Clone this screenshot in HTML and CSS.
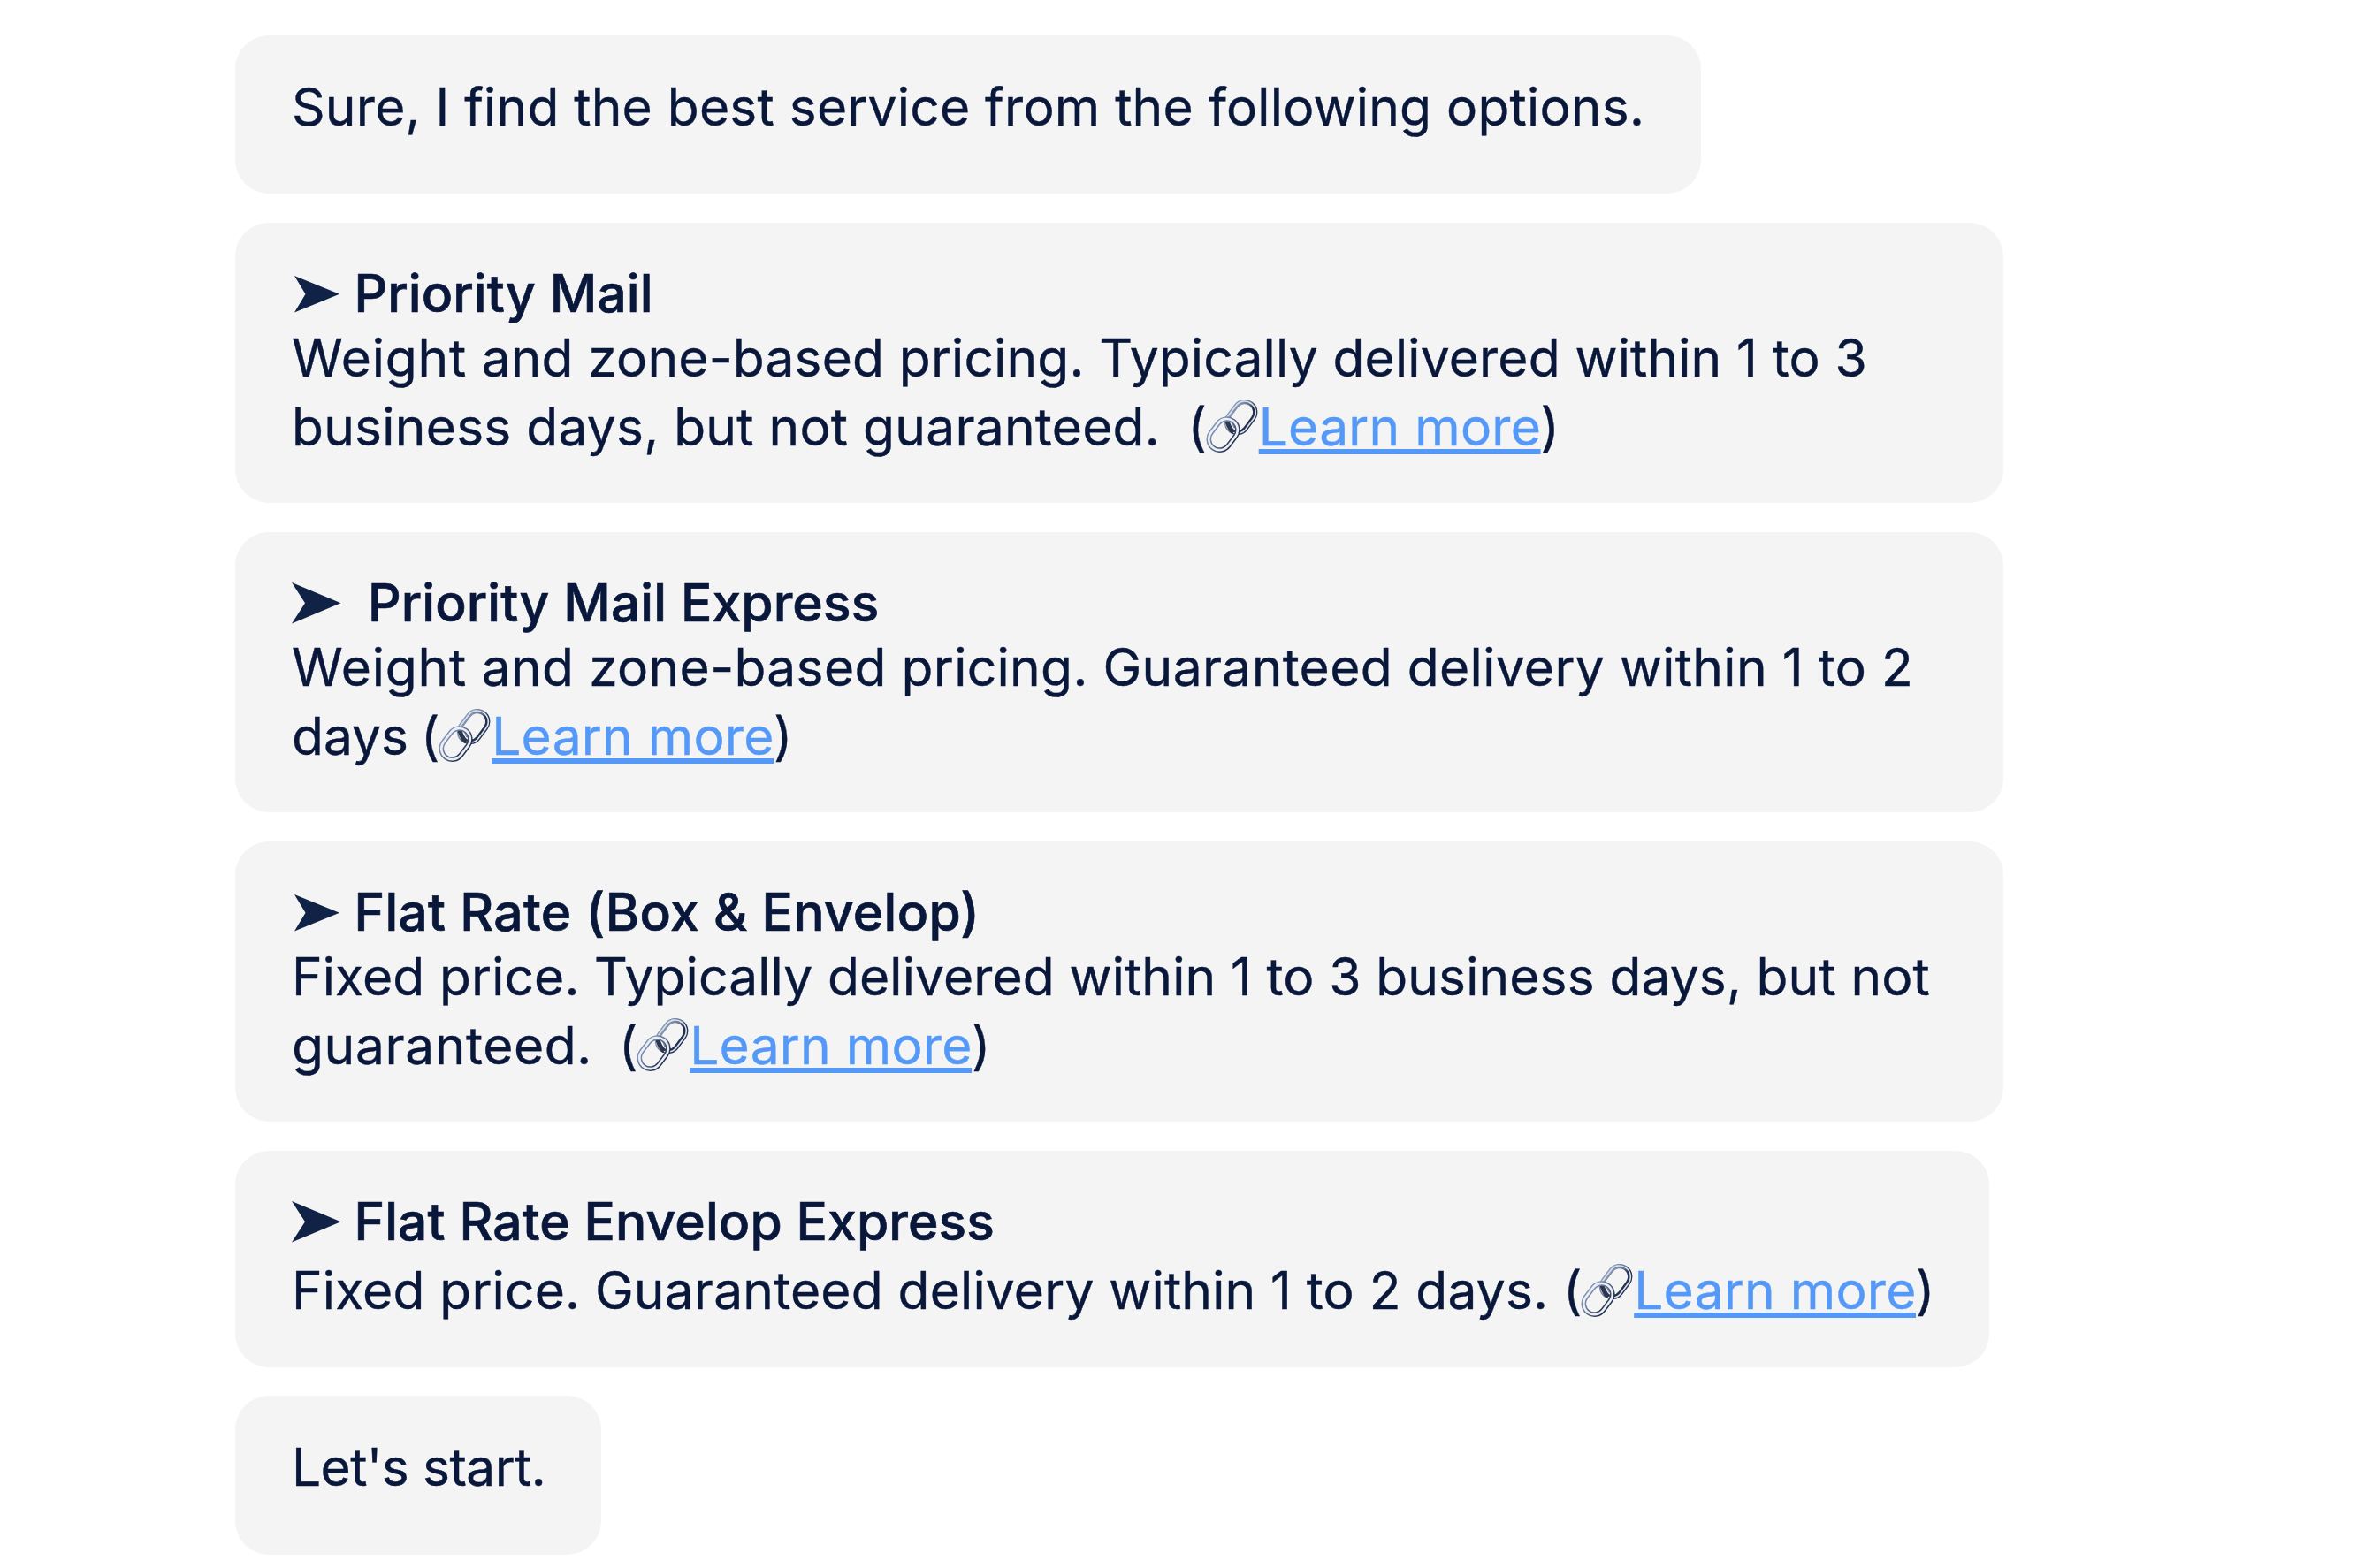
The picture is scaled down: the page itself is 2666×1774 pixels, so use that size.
FILE: index.html
```
<!DOCTYPE html>
<html lang="en">
<head>
<meta charset="utf-8">
<title>Shipping options</title>
<link rel="stylesheet" href="styles.css">
</head>
<body>
<svg class="defs" width="0" height="0" aria-hidden="true">
  <defs>
    <linearGradient id="metal-back" x1="0" y1="0" x2="0" y2="1">
      <stop offset="0" stop-color="#8797b2"/>
      <stop offset=".45" stop-color="#667289"/>
      <stop offset=".7" stop-color="#202b48"/>
      <stop offset="1" stop-color="#26324f"/>
    </linearGradient>
    <linearGradient id="metal-front" x1="0" y1="0" x2="0" y2="1">
      <stop offset="0" stop-color="#8292b0"/>
      <stop offset=".6" stop-color="#58647e"/>
      <stop offset="1" stop-color="#29334d"/>
    </linearGradient>
    <symbol id="arrow-s" viewBox="0 0 51 42"><path d="M0 0 51 20.800 0 41.500 12.500 20.800Z"/></symbol>
    <symbol id="arrow-l" viewBox="0 0 56 47"><path d="M0 0 55.500 23.200 0 46.500 15 23.200Z"/></symbol>
    <symbol id="chain" viewBox="0 0 178 180">
      <g fill="none">
        <g transform="rotate(-53 119.500 60)">
          <rect x="62.500" y="24" width="114" height="72" rx="36" stroke="url(#metal-back)" stroke-width="16"/>
          <rect x="61" y="22.500" width="117" height="75" rx="37" stroke="#d5e0f0" stroke-width="5"/>
        </g>
        <path d="M70 62c4 22 10 36 24 50" stroke="#2b3650" stroke-width="15"/>
        <path d="M78 68c9 5 16 14 19 28" stroke="#8a96ad" stroke-width="6"/>
        <g transform="rotate(-53 59 119)">
          <rect x="2" y="82" width="114" height="74" rx="37" stroke="url(#metal-front)" stroke-width="17"/>
          <rect x="2" y="82" width="114" height="74" rx="37" stroke="#e9f0fa" stroke-width="8"/>
        </g>
      </g>
    </symbol>
  </defs>
</svg>
<main class="chat">
  <section class="bubble bubble-intro">
    <p class="line fit-intro">Sure, I find the best service from the following options.</p>
  </section>

  <section class="bubble bubble-wide">
    <h2 class="title tight"><svg class="arrow small"><use href="#arrow-s"/></svg>Priority Mail</h2>
    <p class="line fit-a"><span class="loose">Weight</span> and zone-based pricing. Typically delivered within 1 to 3</p>
    <p class="line"><span class="lead-a">business days, but not guaranteed.</span>(<svg class="chain"><use href="#chain"/></svg><a class="link">Learn more</a>)</p>
  </section>

  <section class="bubble bubble-wide">
    <h2 class="title tight"><svg class="arrow large spaced"><use href="#arrow-l"/></svg>Priority Mail Express</h2>
    <p class="line fit-c"><span class="loose">Weight</span> and zone-based pricing. Guaranteed delivery within 1 to 2</p>
    <p class="line"><span class="lead-b">days</span>(<svg class="chain"><use href="#chain"/></svg><a class="link">Learn more</a>)</p>
  </section>

  <section class="bubble bubble-wide">
    <h2 class="title tight roomy"><svg class="arrow small"><use href="#arrow-s"/></svg>Flat Rate (Box &amp; Envelop)</h2>
    <p class="line fit-b">Fixed price. Typically delivered within 1 to 3 business days, but not</p>
    <p class="line"><span class="lead-c">guaranteed.</span>(<svg class="chain"><use href="#chain"/></svg><a class="link">Learn more</a>)</p>
  </section>

  <section class="bubble bubble-short">
    <h2 class="title"><svg class="arrow large"><use href="#arrow-l"/></svg>Flat Rate Envelop Express</h2>
    <p class="line"><span class="lead-d">Fixed price. Guaranteed delivery within 1 to 2 days.</span>(<svg class="chain"><use href="#chain"/></svg><a class="link">Learn more</a>)</p>
  </section>

  <section class="bubble bubble-end">
    <p class="line fit-end">Let's start.</p>
  </section>
</main>
</body>
</html>
```
FILE: styles.css
```
body {
  margin: 0;
  background: #fff;
  color: #08173a;
  font: 400 58.7px/78px Inter, "Liberation Sans", sans-serif;
  -webkit-text-stroke: .4px;
}

.defs { position: absolute; }

.chat {
  display: flex;
  flex-direction: column;
  align-items: flex-start;
  gap: 32.7px;
  padding: 39.7px 0 0 266px;
}

.bubble {
  box-sizing: border-box;
  padding: 41.7px 0 47.3px 64px;
  border-radius: 38px;
  background: #f4f4f4;
  white-space: nowrap;
}

.bubble-intro { width: 1658px; padding: 42px 0 59.3px 64px; }
.bubble-wide { width: 2000px; }
.bubble-short { width: 1984px; }
.bubble-end { width: 414px; padding-bottom: 60px; }

.line {
  margin: 0;
  height: 78px;
  letter-spacing: .25px;
}

.fit-intro { letter-spacing: .22px; }
.fit-a { letter-spacing: .16px; }
.fit-b { letter-spacing: .12px; }
.fit-c { letter-spacing: .33px; }
.fit-end { letter-spacing: -.6px; }
.loose { letter-spacing: .8px; }

.title {
  margin: 0;
  height: 78px;
  font-size: inherit;
  font-weight: 500;
  letter-spacing: .12px;
  -webkit-text-stroke: .7px;
}

.title.tight { height: 72.3px; }
.title.roomy { letter-spacing: .3px; }

.arrow { fill: #102347; }

.arrow.small {
  width: 51px;
  height: 42px;
  margin: 0 17px 0 2.500px;
  vertical-align: -1px;
}

.arrow.large {
  width: 56px;
  height: 47px;
  margin-right: 14.500px;
  vertical-align: -3px;
}

.arrow.spaced { margin-right: 30px; }

.chain {
  width: 59px;
  height: 60px;
  margin: 0 1px 0 -1.500px;
  vertical-align: -8.500px;
}

.link {
  color: #5599f8;
  text-decoration: underline 6px;
  text-underline-offset: 4px;
  text-decoration-skip-ink: none;
}

.lead-a, .lead-b, .lead-c, .lead-d { display: inline-block; }
.lead-a { width: 1013.500px; letter-spacing: .24px; }
.lead-b { width: 146px; letter-spacing: 0; }
.lead-c { width: 370px; letter-spacing: .6px; }
.lead-d { width: 1438px; letter-spacing: .18px; }
```
